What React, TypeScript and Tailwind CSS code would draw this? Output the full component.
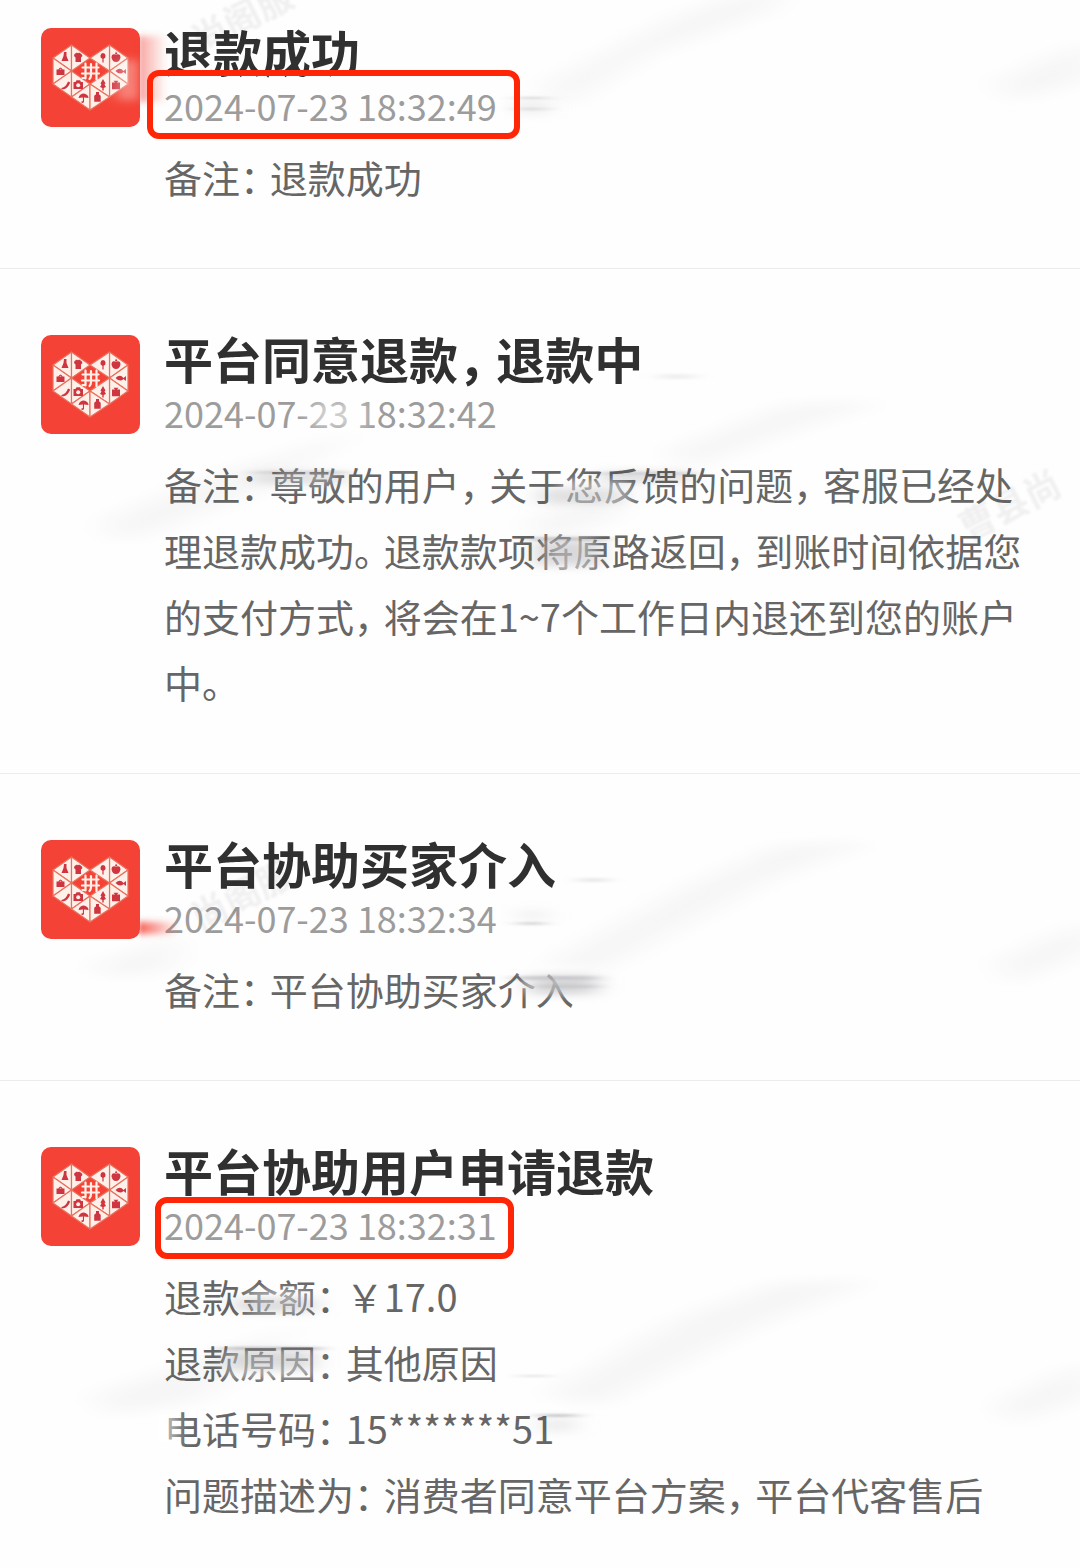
import React from "react";

type Entry = {
  title: string;
  time: string;
  lines: string[];
  mark?: string;
};

const entries: Entry[] = [
  {
    title: "退款成功",
    time: "2024-07-23 18:32:49",
    lines: ["备注：退款成功"],
    mark: "-left-[17px] -right-[23px] -top-2 -bottom-[7px]",
  },
  {
    title: "平台同意退款，退款中",
    time: "2024-07-23 18:32:42",
    lines: [
      "备注：尊敬的用户，关于您反馈的问题，客服已经处理退款成功。退款款项将原路返回，到账时间依据您的支付方式，将会在1~7个工作日内退还到您的账户中。",
    ],
  },
  {
    title: "平台协助买家介入",
    time: "2024-07-23 18:32:34",
    lines: ["备注：平台协助买家介入"],
  },
  {
    title: "平台协助用户申请退款",
    time: "2024-07-23 18:32:31",
    lines: [
      "退款金额：￥17.0",
      "退款原因：其他原因",
      "电话号码：15*******51",
      "问题描述为：消费者同意平台方案，平台代客售后",
    ],
    mark: "-left-[9px] -right-[17px] top-0 -bottom-2",
  },
];

/* Sets full-width punctuation on three quarters of an em. */
function Prose({ text }: { text: string }) {
  return (
    <>
      {text.split(/([，。：])/).map((part, i) =>
        /^[，。：]$/.test(part) ? (
          <span key={i} className="mr-[0.28em] [font-feature-settings:'halt']">
            {part}
          </span>
        ) : (
          <React.Fragment key={i}>{part}</React.Fragment>
        )
      )}
    </>
  );
}

function Logo() {
  return (
    <svg viewBox="0 0 99 99" className="size-[99px] shrink-0" role="img" aria-label="拼多多">
      <rect width="99" height="99" rx="10" fill="#f44336" />
      <g fill="#fff1e9" stroke="#e8705f" strokeWidth="1.200" strokeLinejoin="round">
        <path d="M12 30 30.500 17V43z" />
        <path d="M30.500 17 49 30 30.500 43z" />
        <path d="M12 30V56L30.500 43z" />
        <path d="M12 56 30.500 43V69z" />
        <path d="M30.500 43V69L49 56z" />
        <path d="M30.500 69 49 56V82z" />
        <path d="M87 30 68.500 17V43z" />
        <path d="M68.500 17 49 30 68.500 43z" />
        <path d="M87 30V56L68.500 43z" />
        <path d="M87 56 68.500 43V69z" />
        <path d="M68.500 43V69L49 56z" />
        <path d="M68.500 69 49 56V82z" />
      </g>
      {/* stylised centre mark */}
      <g stroke="#fff1e9" strokeWidth="2.200" fill="none" strokeLinecap="round">
        <path d="M41.500 39.500H57.500M41 45.500H58M44.500 35.500V50.500M50 36V47Q50 49.500 48.500 51M55.500 35.500V51.500M41.500 50H44.500" />
      </g>
      <g fill="#cf3540">
        <path d="M23 24h2.500l0 4 2 5h-7l2-5z" />
        <path d="M33.500 26l2.500-1.500q1 1.500 2 0l2.500 1.500 1 2-1.500 1.500v4.500h-5.500v-4.500l-1.500-1.500z" />
        <path d="M15.500 41.500h8v5.500h-8zM17 42q2.500-5 5 0l-1.200 0q-1.300-2.500-2.600 0z" />
        <path d="M20.500 60q4.500-1 6.500-6.500l2.200 1q-2 5.500-6.500 6.800h-2.200z" />
        <path d="M32.500 54h2l1-1.800h3.500l1 1.800h2v7h-9.500z" />
        <circle cx="37.200" cy="57.300" r="2" fill="#fff1e9" />
        <path d="M37.500 70q1-4.500 5.500-4.500 4.500 1 4.500 4.500l-4.500-.5v4.500q-1 1.500-2.700.5l.3-1.200 1.300 0v-3.800z" />
        <path d="M55 64h3v2.200l1.700 1.500v6h-6.500v-6l1.800-1.500z" />
        <path d="M62 25a3 3 0 0 1 .6 5.800v3.700h-1.200v-3.700a3 3 0 0 1 .6-5.800z" />
        <path d="M75 26.500q4.500-1.500 4.500 3-1 4.500-4.500 4.500-3.500 0-4.500-4.500 0-4.500 4.500-3zM75 23.500l1.500 2.500h-2.500z" />
        <path d="M74.500 43q4.500-4.500 8 0l2.500-2v5l-2.500-2q-3.500 3.500-8-1z" />
        <path d="M62 51l2.500 4.500-1 1 1.500 2.500-2.300 1v2.500h-1.400v-2.500l-2.300-1 1.500-2.500-1-1z" />
        <path d="M71 54.500h3l-1.500-1.800h5l-1.500 1.800h3v6.800h-8z" />
      </g>
    </svg>
  );
}

/* Soft pale and red patches where the watermark was wiped over the page. */
function Patches() {
  return (
    <svg
      aria-hidden="true"
      viewBox="0 0 1080 1568"
      className="pointer-events-none absolute top-0 left-0 w-full"
    >
      <defs>
        <filter id="patch" x="-30%" y="-60%" width="160%" height="220%">
          <feGaussianBlur stdDeviation="8 4" />
        </filter>
        <linearGradient id="smear">
          <stop offset="0" stopColor="#f44336" stopOpacity=".85" />
          <stop offset="1" stopColor="#f44336" stopOpacity="0" />
        </linearGradient>
        <filter id="smearBlur" x="-10%" y="-60%" width="120%" height="220%">
          <feGaussianBlur stdDeviation="2 3" />
        </filter>
      </defs>
      <g fill="#fff" filter="url(#patch)">
        <rect x="310" y="402" width="56" height="26" opacity=".5" />
        <rect x="276" y="470" width="60" height="16" opacity=".4" />
        <rect x="560" y="480" width="70" height="30" opacity=".5" />
        <rect x="545" y="536" width="50" height="36" opacity=".6" />
        <rect x="525" y="972" width="60" height="22" opacity=".75" />
        <rect x="248" y="1290" width="60" height="24" opacity=".5" />
        <rect x="225" y="1350" width="90" height="28" opacity=".5" />
        <rect x="150" y="1408" width="26" height="40" opacity=".6" />
        <rect x="118" y="60" width="20" height="40" opacity=".4" />
      </g>
      <g fill="url(#smear)" filter="url(#smearBlur)">
        <rect x="139" y="36" width="28" height="66" opacity=".55" />
        <rect x="139" y="922" width="40" height="12" />
      </g>
    </svg>
  );
}

/* Faint diagonal watermark and grey streaks, darkening what lies below. */
function Haze() {
  return (
    <svg
      aria-hidden="true"
      viewBox="0 0 1080 1568"
      className="pointer-events-none absolute top-0 left-0 w-full mix-blend-multiply"
    >
      <defs>
        <filter id="soft" x="-30%" y="-80%" width="160%" height="260%">
          <feGaussianBlur stdDeviation="18 6" />
        </filter>
        <filter id="streak" x="-30%" y="-200%" width="160%" height="500%">
          <feGaussianBlur stdDeviation="10 1" />
        </filter>
        <filter id="smudge" x="-30%" y="-100%" width="160%" height="300%">
          <feGaussianBlur stdDeviation="12 4" />
        </filter>
        <filter id="faint" x="-10%" y="-20%" width="120%" height="140%">
          <feGaussianBlur stdDeviation="1" />
        </filter>
      </defs>
      <g fill="#f7f7f7" filter="url(#soft)">
        <path d="M545 84 680 15 790-20 770 10 650 54 560 108z" />
        <path d="M1000 80 1090 40V78L1010 102z" />
        <path d="M670 450 790 404 880 402 800 428 690 468z" />
        <path d="M530 520 630 485 610 520 540 542z" />
        <path d="M105 520 200 480 360 430 260 490 160 530 115 542z" />
        <path d="M545 965 680 890 780 845 870 842 770 880 600 970z" />
        <path d="M1000 960 1090 920V950L1010 985z" />
        <path d="M95 965 180 935 170 970 110 978z" />
        <path d="M545 1395 680 1318 780 1282 870 1281 760 1325 600 1405z" />
        <path d="M1000 1402 1090 1360V1395L1010 1425z" />
        <path d="M95 1395 200 1360 300 1325 200 1400 110 1415z" />
      </g>
      <g
        fill="#f1f1f1"
        fontSize="36"
        fontWeight="700"
        fontFamily="'Noto Sans CJK SC', sans-serif"
        filter="url(#faint)"
      >
        <text transform="translate(200 54) rotate(-27)">尚阁服</text>
        <text transform="translate(968 542) rotate(-27)">曹县尚</text>
        <text transform="translate(200 932) rotate(-27)">尚阁服</text>
      </g>
      <g fill="#c4c4c8" filter="url(#smudge)">
        <rect x="518" y="100" width="28" height="14" opacity=".3" />
        <rect x="255" y="472" width="90" height="12" opacity=".5" />
        <rect x="600" y="472" width="90" height="10" opacity=".6" />
        <rect x="540" y="488" width="80" height="16" opacity=".5" />
        <rect x="536" y="540" width="64" height="26" opacity=".65" />
        <rect x="520" y="910" width="26" height="10" opacity=".25" />
        <rect x="530" y="976" width="66" height="18" opacity=".75" />
        <rect x="235" y="1298" width="80" height="14" opacity=".6" />
        <rect x="225" y="1350" width="88" height="20" opacity=".6" />
        <rect x="540" y="1418" width="34" height="14" opacity=".3" />
      </g>
      <g fill="#c4c4c8" filter="url(#streak)">
        <rect x="518" y="97" width="28" height="2" opacity=".7" />
        <rect x="518" y="108" width="28" height="2" opacity=".6" />
        <rect x="660" y="374" width="34" height="5" opacity=".25" />
        <rect x="255" y="471" width="90" height="3" opacity=".6" />
        <rect x="600" y="472" width="90" height="3" opacity=".6" />
        <rect x="530" y="537" width="75" height="4" opacity=".8" />
        <rect x="580" y="878" width="26" height="4" opacity=".4" />
        <rect x="520" y="922" width="22" height="3" opacity=".8" />
        <rect x="515" y="976" width="80" height="4" opacity=".8" />
        <rect x="540" y="985" width="55" height="3" opacity=".7" />
        <rect x="225" y="1347" width="95" height="3" />
        <rect x="520" y="1375" width="28" height="2" opacity=".5" />
        <rect x="540" y="1414" width="36" height="3" opacity=".9" />
      </g>
    </svg>
  );
}

export default function App() {
  return (
    <main
      lang="zh-CN"
      className="relative min-h-screen overflow-hidden bg-[#fefefe] font-['Noto_Sans_CJK_SC',sans-serif]"
    >
      <ol>
        {entries.map((entry) => (
          <li
            key={entry.time}
            className="flex gap-6 border-b border-[#ececec] px-[41px] pt-[66px] pb-[58px] first:pt-7 last:border-b-0 last:pb-9"
          >
            <Logo />
            <article className="min-w-0 flex-1">
              <h2 className="text-[49px] leading-[46px] font-bold text-[#303030]">
                <Prose text={entry.title} />
              </h2>
              <div className="relative mt-1 w-fit text-[36px] leading-[54px] text-[#9c9c9c]">
                <time>{entry.time}</time>
                {entry.mark && (
                  <span
                    className={`absolute z-10 rounded-xl border-6 border-[#ff2608] ${entry.mark}`}
                  />
                )}
              </div>
              <div className="mt-3 text-[38px] leading-[66px] text-[#666]">
                {entry.lines.map((line) => (
                  <p key={line}>
                    <Prose text={line} />
                  </p>
                ))}
              </div>
            </article>
          </li>
        ))}
      </ol>
      <Patches />
      <Haze />
    </main>
  );
}
